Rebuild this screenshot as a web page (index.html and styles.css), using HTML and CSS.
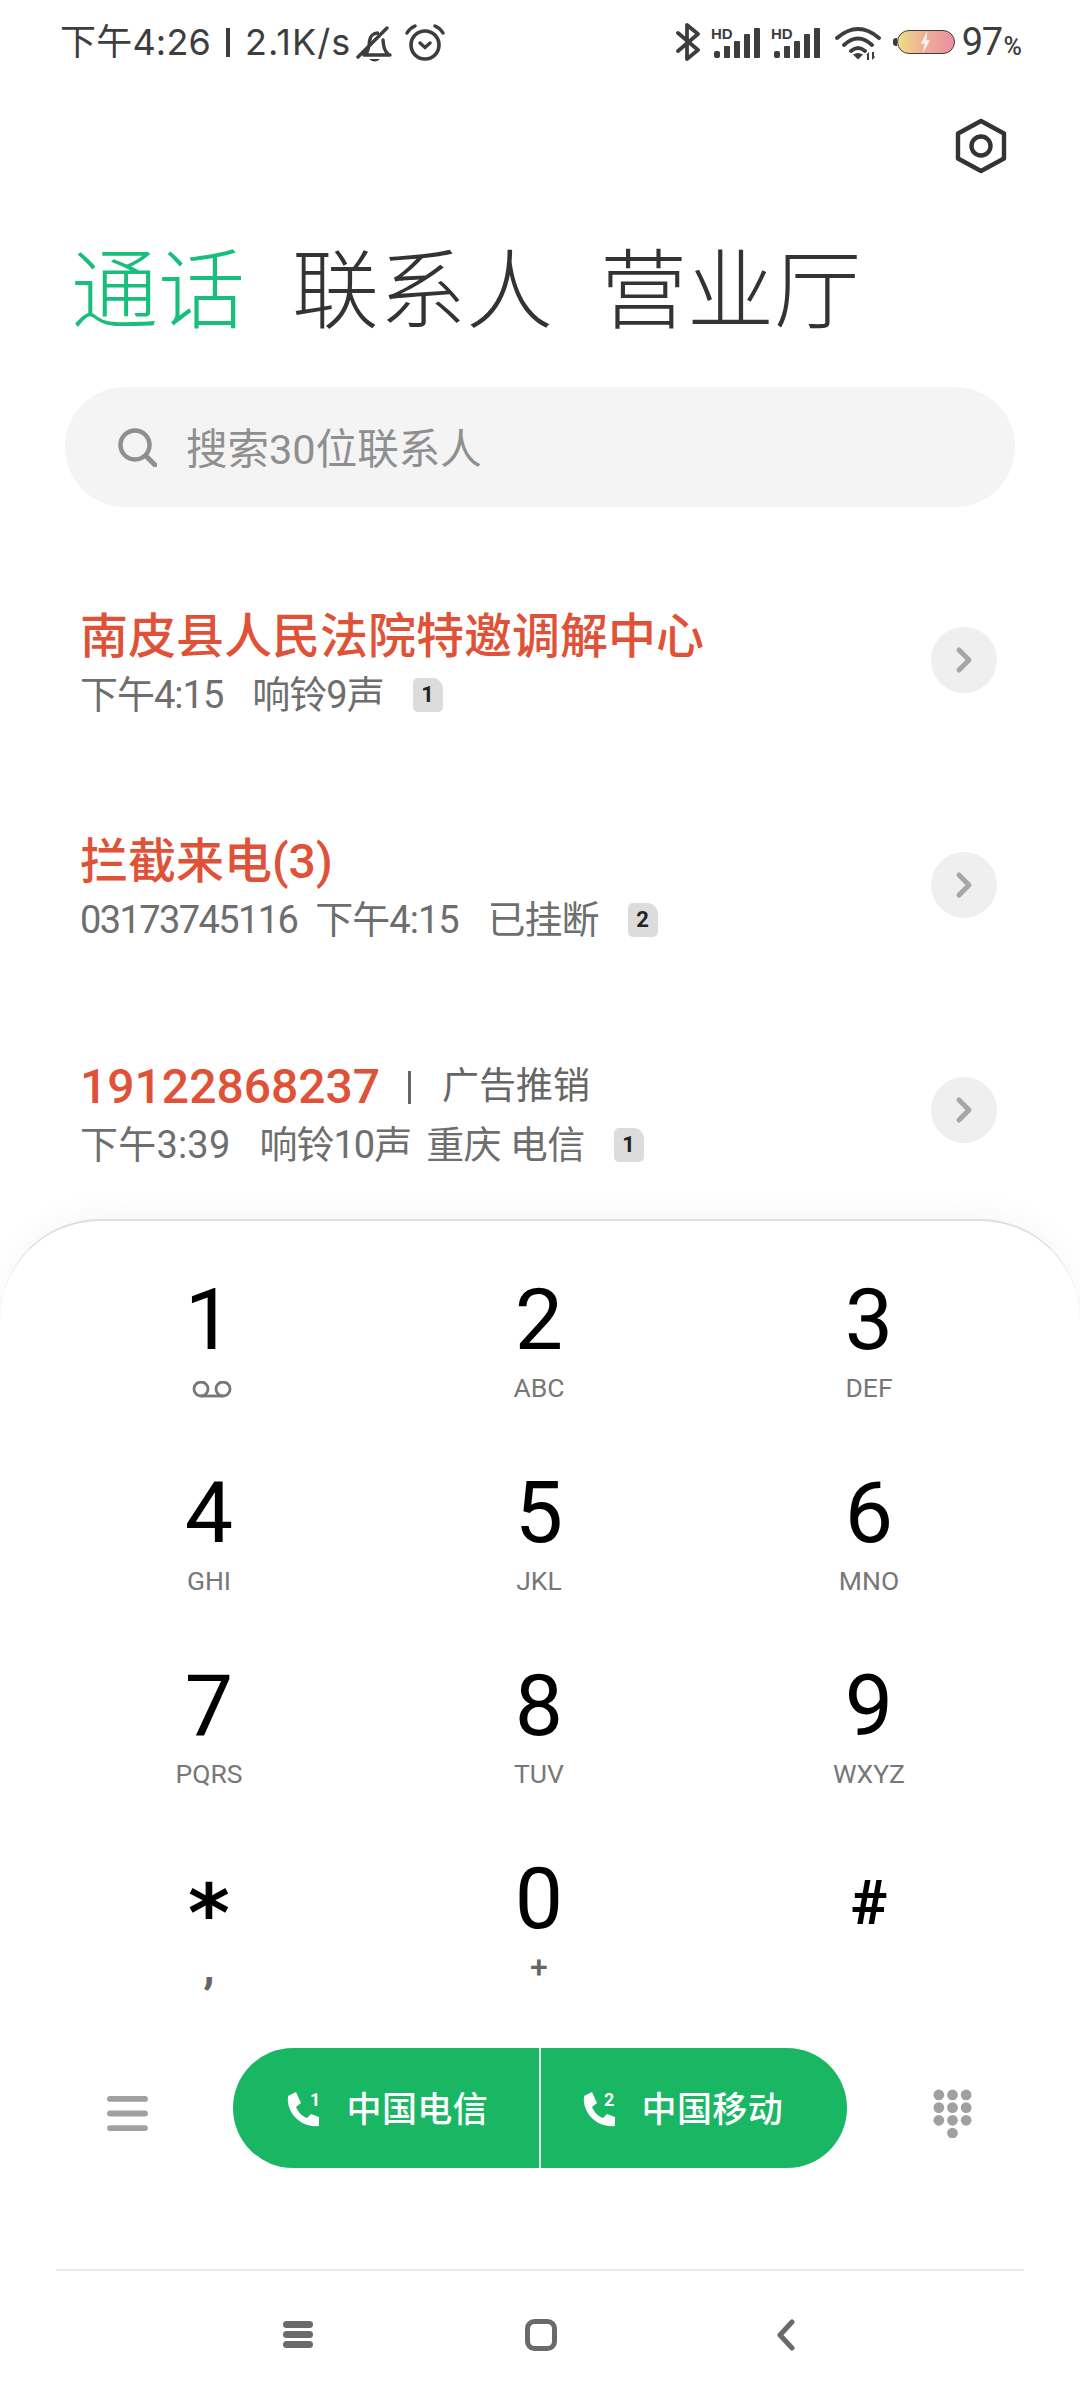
FILE: index.html
```html
<!DOCTYPE html>
<html lang="zh">
<head>
<meta charset="utf-8">
<title>通话</title>
<link rel="stylesheet" href="styles.css">
</head>
<body>
<div class="phone">
  <div class="status">
    <div class="status-left">
      <span class="st-time">下午4:26</span><i class="st-sep"></i><span class="st-speed">2.1K/s</span>
      <svg class="ic-bell" viewBox="0 0 36 38"><path d="M8 30h26M9 30c4-4 4-9 4.500-14 .6-5 4-8 8-8M27 15c.5 6 1 11 6 15M2 32 31 3" fill="none" stroke="#3d3d3d" stroke-width="3.400" stroke-linecap="round"/><path d="M13 34h11q-5 5-11 0z" fill="#3d3d3d"/></svg>
      <svg class="ic-alarm" viewBox="0 0 40 38"><circle cx="20" cy="21" r="14" fill="none" stroke="#3d3d3d" stroke-width="3.600"/><path d="M2 9q3-5 8-7M38 9q-3-5-8-7M15 19l5 4.500 5-4.500" fill="none" stroke="#3d3d3d" stroke-width="3.400" stroke-linecap="round"/></svg>
    </div>
    <div class="status-right">
      <svg class="ic-bt" viewBox="0 0 26 38"><path d="M3 10 23 27 12 36V2l11 9L3 28" fill="none" stroke="#3d3d3d" stroke-width="3.800" stroke-linejoin="round" stroke-linecap="round"/></svg>
      <svg class="ic-sig" viewBox="0 0 50 32"><text x="0" y="12" class="hd">HD</text><rect x="3" y="24" width="6" height="7" rx="2"/><rect x="13" y="19" width="6" height="12" rx="1"/><rect x="23" y="14" width="6" height="17" rx="1"/><rect x="33" y="7" width="6" height="24" rx="1"/><rect x="43" y="1" width="6" height="30" rx="1"/></svg>
      <svg class="ic-sig" viewBox="0 0 50 32"><text x="0" y="12" class="hd">HD</text><rect x="3" y="24" width="6" height="7" rx="2"/><rect x="13" y="19" width="6" height="12" rx="1"/><rect x="23" y="14" width="6" height="17" rx="1"/><rect x="33" y="7" width="6" height="24" rx="1"/><rect x="43" y="1" width="6" height="30" rx="1"/></svg>
      <svg class="ic-wifi" viewBox="0 0 46 34"><path d="M2 12Q23-6 44 12M9 19Q23 6 37 19M16 25q7-6 14 0" fill="none" stroke="#3d3d3d" stroke-width="3.800" stroke-linecap="round"/><path d="M18 28.500q5-3 10 0l-5 5zM31 29l3-3v8h-2v-5zM37 26v8l3-3-1-1v-4z" fill="#3d3d3d"/></svg>
      <div class="battery"><svg class="bat-bolt" viewBox="0 0 12 24"><path d="M8 0 1 14h4l-2 10 8-14H7z" fill="#f3f3f3"/></svg></div>
      <span class="bat-num">97</span><span class="bat-pct">%</span>
    </div>
  </div>

  <div class="topbar">
    <svg class="ic-hex" viewBox="0 0 52 56"><path d="M26 3 49 15.500v25L26 53 3 40.500v-25z" fill="none" stroke="#333" stroke-width="4.400" stroke-linejoin="round"/><circle cx="26" cy="28" r="9.500" fill="none" stroke="#333" stroke-width="4.400"/></svg>
  </div>

  <div class="tabs">
    <span class="tab tab-on">通话</span>
    <span class="tab">联系人</span>
    <span class="tab">营业厅</span>
  </div>

  <div class="search">
    <svg class="ic-search" viewBox="0 0 40 40"><circle cx="18" cy="18" r="14.500" fill="none" stroke="#8f8f8f" stroke-width="4.500"/><path d="M29 29l9 9" stroke="#8f8f8f" stroke-width="5" stroke-linecap="round"/></svg>
    <span class="search-text">搜索30位联系人</span>
  </div>

  <div class="calls">
    <div class="call">
      <div class="call-info">
        <div class="call-name">南皮县人民法院特邀调解中心</div>
        <div class="call-meta"><span>下午4:15</span><span>响铃9声</span><span class="sim">1</span></div>
      </div>
      <div class="more"><svg viewBox="0 0 18 28"><path d="M4 4l10 10L4 24" fill="none" stroke="#a6a6a6" stroke-width="5" stroke-linecap="round" stroke-linejoin="round"/></svg></div>
    </div>
    <div class="call">
      <div class="call-info">
        <div class="call-name">拦截来电(3)</div>
        <div class="call-meta"><span class="num">03173745116</span><span class="narrow">下午4:15</span><span>已挂断</span><span class="sim">2</span></div>
      </div>
      <div class="more"><svg viewBox="0 0 18 28"><path d="M4 4l10 10L4 24" fill="none" stroke="#a6a6a6" stroke-width="5" stroke-linecap="round" stroke-linejoin="round"/></svg></div>
    </div>
    <div class="call">
      <div class="call-info">
        <div class="call-name">19122868237<i class="sep"></i><span class="tag">广告推销</span></div>
        <div class="call-meta"><span class="wide">下午3:39</span><span>响铃10声</span><span class="tight">重庆 电信</span><span class="sim">1</span></div>
      </div>
      <div class="more"><svg viewBox="0 0 18 28"><path d="M4 4l10 10L4 24" fill="none" stroke="#a6a6a6" stroke-width="5" stroke-linecap="round" stroke-linejoin="round"/></svg></div>
    </div>
  </div>

  <div class="dialer">
    <div class="keys">
      <div class="key"><span class="digit">1</span><svg class="ic-vm" viewBox="0 0 40 17"><circle cx="9" cy="8" r="7" fill="none" stroke="#777" stroke-width="2.800"/><circle cx="31" cy="8" r="7" fill="none" stroke="#777" stroke-width="2.800"/><path d="M9 15h22" stroke="#777" stroke-width="2.800"/></svg></div>
      <div class="key"><span class="digit">2</span><span class="sub">ABC</span></div>
      <div class="key"><span class="digit">3</span><span class="sub">DEF</span></div>
      <div class="key"><span class="digit">4</span><span class="sub">GHI</span></div>
      <div class="key"><span class="digit">5</span><span class="sub">JKL</span></div>
      <div class="key"><span class="digit">6</span><span class="sub">MNO</span></div>
      <div class="key"><span class="digit">7</span><span class="sub">PQRS</span></div>
      <div class="key"><span class="digit">8</span><span class="sub">TUV</span></div>
      <div class="key"><span class="digit">9</span><span class="sub">WXYZ</span></div>
      <div class="key"><span class="digit star">*</span><span class="sub comma">,</span></div>
      <div class="key"><span class="digit">0</span><span class="sub plus">+</span></div>
      <div class="key"><span class="digit hash">#</span><span class="sub">&nbsp;</span></div>
    </div>
    <div class="actions">
      <svg class="ic-menu" viewBox="0 0 42 36"><rect y="0" width="42" height="6" rx="3"/><rect y="15" width="42" height="6" rx="3"/><rect y="30" width="42" height="6" rx="3"/></svg>
      <div class="dial">
        <div class="sim-btn sim-btn-1">
          <svg class="ic-phone" viewBox="0 0 34 35"><path d="M2 4 10 0l5 11-5 4c2 5 6 9 11 11l4-4 8 3v9C15 36 0 21 2 4z" fill="#fff"/><text x="24" y="14" class="ph-n">1</text></svg>
          <span>中国电信</span>
        </div>
        <div class="sim-btn sim-btn-2">
          <svg class="ic-phone" viewBox="0 0 34 35"><path d="M2 4 10 0l5 11-5 4c2 5 6 9 11 11l4-4 8 3v9C15 36 0 21 2 4z" fill="#fff"/><text x="22" y="14" class="ph-n">2</text></svg>
          <span>中国移动</span>
        </div>
      </div>
      <svg class="ic-pad" viewBox="0 0 40 50"><g fill="#a0a0a0"><circle cx="6" cy="6" r="5.500"/><circle cx="20" cy="6" r="5.500"/><circle cx="34" cy="6" r="5.500"/><circle cx="6" cy="19" r="5.500"/><circle cx="20" cy="19" r="5.500"/><circle cx="34" cy="19" r="5.500"/><circle cx="6" cy="32" r="5.500"/><circle cx="20" cy="32" r="5.500"/><circle cx="34" cy="32" r="5.500"/><circle cx="20" cy="45" r="5.500"/></g></svg>
    </div>
    <div class="navbar">
      <svg class="nav-menu" viewBox="0 0 30 27"><rect y="0" width="30" height="7" rx="3.500"/><rect y="10" width="30" height="7" rx="3.500"/><rect y="20" width="30" height="7" rx="3.500"/></svg>
      <svg class="nav-home" viewBox="0 0 32 32"><rect x="2.500" y="2.500" width="27" height="27" rx="7" fill="none" stroke="#6a6a6a" stroke-width="5"/></svg>
      <svg class="nav-back" viewBox="0 0 20 32"><path d="M16 3 4 16l12 13" fill="none" stroke="#6a6a6a" stroke-width="5" stroke-linecap="round" stroke-linejoin="round"/></svg>
    </div>
  </div>
</div>
</body>
</html>
```

FILE: styles.css
```css
* { box-sizing: border-box; }
html, body { margin: 0; padding: 0; background: #fff; }
body { font-family: Roboto, "Noto Sans CJK SC", "Noto Sans", sans-serif; }
.phone { position: relative; width: 1080px; height: 2400px; display: flex; flex-direction: column; overflow: hidden; background: #fff; }

.status { height: 84px; padding: 18px 58px 0 60px; display: flex; justify-content: space-between; align-items: flex-start; }
.status-left { display: flex; align-items: center; height: 48px; }
.st-time, .st-speed { font-family: "Inter", "Noto Sans CJK SC", sans-serif; font-size: 36px; line-height: 48px; color: #3d3d3d; white-space: nowrap; }
.st-time { letter-spacing: .2px; }
.st-speed { letter-spacing: 1px; }
.st-sep { width: 4px; height: 29px; background: #3d3d3d; margin: 0 15px; }
.ic-bell { width: 36px; height: 38px; margin-left: 5px; margin-top: 4px; }
.ic-alarm { width: 40px; height: 38px; margin-left: 13px; margin-top: 2px; }
.status-right { display: flex; align-items: center; height: 48px; }
.ic-bt { width: 26px; height: 38px; }
.ic-sig { width: 50px; height: 32px; margin-left: 10px; fill: #3d3d3d; margin-top: 2px; overflow: visible; }
.hd { font: 700 15px "Liberation Sans", sans-serif; fill: #3d3d3d; }
.ic-wifi { width: 46px; height: 34px; margin-left: 14px; margin-top: 2px; }
.battery { position: relative; width: 58px; height: 24px; margin-left: 16px; border: 1px solid #3d3d3d; border-radius: 12px; background: linear-gradient(90deg, #f0dd86, #eeb096 45%, #ec939f 90%); display: flex; align-items: center; justify-content: center; }
.battery::before { content: ""; position: absolute; left: -5px; top: 7px; width: 4px; height: 8px; border-radius: 3px 0 0 3px; background: #3d3d3d; }
.bat-bolt { width: 11px; height: 22px; }
.bat-num { font-family: Roboto, sans-serif; font-size: 38px; font-weight: 400; color: #3d3d3d; margin-left: 7px; letter-spacing: -1.500px; line-height: 48px; }
.bat-pct { font-family: Roboto, sans-serif; font-size: 25px; font-weight: 500; color: #3d3d3d; margin: 9px 0 0 2px; line-height: 30px; }

.topbar { height: 62px; padding-right: 73px; display: flex; justify-content: flex-end; align-items: flex-start; }
.ic-hex { width: 52px; height: 56px; margin-top: 34px; }

.tabs { height: 110px; padding-left: 71px; margin-top: 91px; display: flex; gap: 47px; align-items: center; }
.tab { font-size: 87px; line-height: 110px; font-weight: 300; color: #333; }
.tab-on { color: #19bd7c; }

.search { width: 950px; height: 120px; margin: 40px 0 0 65px; border-radius: 60px; background: #f4f4f4; display: flex; align-items: center; padding-left: 52px; }
.ic-search { width: 40px; height: 40px; }
.search-text { margin-left: 29px; font-size: 41.500px; color: #8f8f8f; margin-top: -2px; }

.calls { margin-top: 98px; padding: 0 83px 0 80px; display: flex; flex-direction: column; gap: 109px; }
.call { display: flex; justify-content: space-between; align-items: center; height: 116px; }
.call-name { font-size: 48px; line-height: 64px; font-weight: 500; color: #df5238; display: flex; align-items: center; }
.sep { width: 3px; height: 33px; background: #666; margin: 0 31px 0 28px; }
.tag { font-size: 37px; font-weight: 400; color: #666; }
.call-meta { font-size: 38px; line-height: 52px; color: #6e6e6e; display: flex; align-items: center; gap: 29px; letter-spacing: -1px; }
.num { letter-spacing: -1.600px; }
.narrow { margin-left: -11px; }
.wide { letter-spacing: .2px; }
.tight { margin-left: -14px; letter-spacing: -.6px; }
.sim { width: 30px; height: 34px; border-radius: 5px 11px 5px 5px; background: #dcdcdc; color: #222; font-size: 22px; font-weight: 700; line-height: 34px; text-align: center; letter-spacing: 0; }
.more { width: 66px; height: 66px; margin-bottom: 6px; border-radius: 50%; background: #efefef; display: flex; align-items: center; justify-content: center; }
.more svg { width: 18px; height: 28px; }

.dialer { position: absolute; left: 0; top: 1219px; width: 1080px; height: 1181px; background: #fff; border-top: 2px solid #dedede; border-radius: 100px 100px 0 0; box-shadow: 0 -6px 30px rgba(0,0,0,.035); }
.keys { display: grid; grid-template-columns: repeat(3, 330px); justify-content: center; grid-auto-rows: 193px; padding-top: 52px; margin-left: -2px; }
.key { display: flex; flex-direction: column; align-items: center; }
.digit { font-family: Roboto, sans-serif; font-size: 86px; line-height: 94px; color: #000; font-weight: 400; }
.sub { font-size: 26.500px; line-height: 34px; color: #777; margin-top: 4px; font-family: Roboto, sans-serif; }
.ic-vm { width: 40px; height: 17px; margin: 14px 0 0 6px; }
.star { font-family: "DejaVu Sans", sans-serif; font-size: 80px; font-weight: 700; line-height: 64px; padding-top: 30px; }
.hash { font-size: 62px; font-weight: 700; padding-top: 8px; line-height: 86px; }
.comma { font-size: 46px; font-weight: 700; color: #666; line-height: 34px; }
.plus { font-size: 32px; font-weight: 500; color: #666; }
.actions { margin-top: 3px; padding: 0 108px 0 107px; height: 120px; display: flex; align-items: center; justify-content: space-between; }
.ic-menu { width: 41px; height: 35px; fill: #a0a0a0; margin-top: 10px; }
.ic-pad { width: 39px; height: 49px; margin-top: 10px; }
.dial { width: 614px; height: 120px; border-radius: 60px; overflow: hidden; display: flex; background: #19b664; margin-left: -2px; }
.sim-btn { display: flex; align-items: center; color: #fff; font-size: 35px; font-weight: 500; letter-spacing: .4px; padding-bottom: 4px; }
.sim-btn-1 { width: 308px; padding-left: 53px; gap: 27px; border-right: 2px solid #e6f8ee; }
.sim-btn-2 { flex: 1; padding-left: 41px; gap: 26px; }
.ic-phone { width: 34px; height: 35px; margin-top: 6px; overflow: visible; }
.ph-n { font: 700 18px Roboto, sans-serif; fill: #fff; }

.navbar { margin: 101px 56px 0; height: 130px; border-top: 2px solid #e8e8e8; display: flex; align-items: flex-start; padding-top: 49px; }
.nav-menu { width: 30px; height: 27px; margin: 1px 0 0 227px; fill: #6a6a6a; }
.nav-home { width: 32px; height: 32px; margin-left: 212px; margin-top: -1px; }
.nav-back { width: 20px; height: 32px; margin-left: 219px; margin-top: -1px; }
```
